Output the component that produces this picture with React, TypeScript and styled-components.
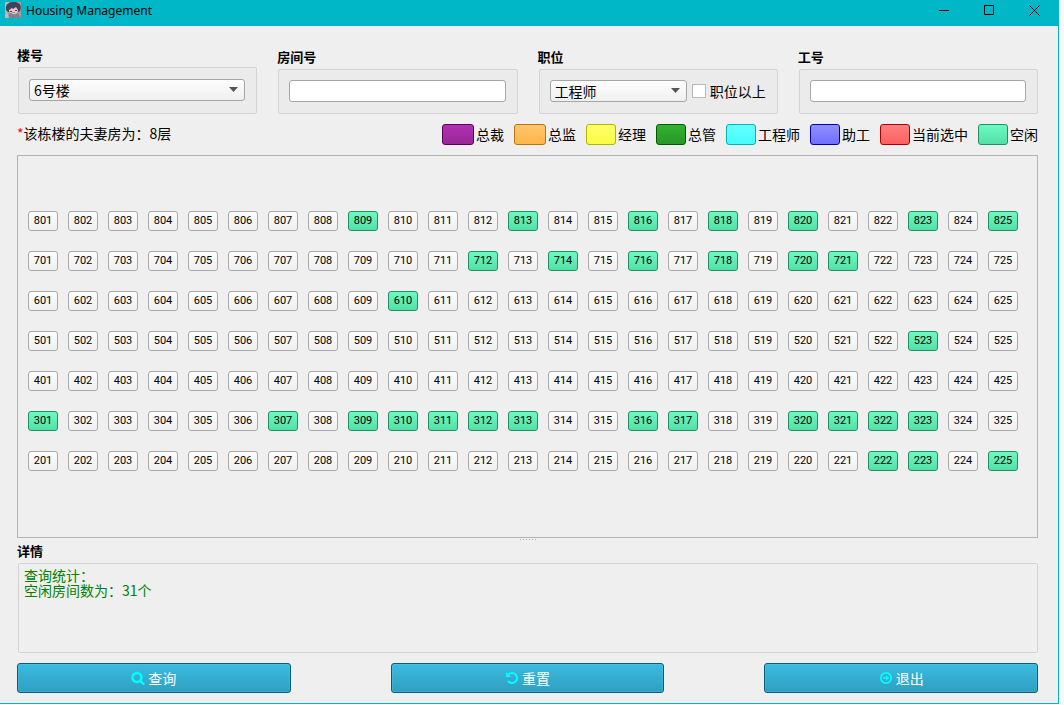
import React, { useState } from "react";
import styled, { createGlobalStyle } from "styled-components";

const GlobalStyle = createGlobalStyle`
  * { box-sizing: border-box; }
  body {
    margin: 0;
    background: #f8f8f8;
    color: #000;
    font-family: "Noto Sans CJK SC", "Noto Sans", sans-serif;
    font-size: 14px;
  }
  button, input, select, textarea { font: inherit; color: inherit; margin: 0; }
`;

const Frame = styled.div`
  min-height: 100vh;
  display: flex;
  padding: 0 5px 1px 0;
`;

const Window = styled.div`
  flex: 1;
  min-width: 0;
  display: flex;
  flex-direction: column;
  background: #efefef;
  border: solid #00b7c7;
  border-width: 0 1px 1px 0;
`;

const TitleBar = styled.header`
  display: flex;
  align-items: flex-start;
  height: 26px;
  padding: 0 1px 0 5px;
  background: #00b7c7;
`;

const Avatar = styled.svg`
  width: 16px;
  height: 16px;
  margin: 2px 5px 0 0;
`;

const Title = styled.h1`
  flex: 1;
  margin: 0;
  font: 400 12px/22px "Noto Sans", sans-serif;
`;

const WindowButton = styled.button`
  display: flex;
  justify-content: center;
  align-items: center;
  width: 45px;
  height: 21px;
  padding: 0;
  border: 0;
  background: none;
`;

const Content = styled.main`
  flex: 1;
  display: flex;
  flex-direction: column;
  padding: 18px 20px 10px 17px;
`;

const Filters = styled.div`
  display: grid;
  grid-template-columns: repeat(4, 1fr);
  gap: 20px;
  align-items: end;
`;

const Caption = styled.h2`
  margin: 0;
  font-size: 13px;
  font-weight: 700;
  line-height: 20px;
`;

const GroupBox = styled.div<{ $tall?: boolean }>`
  display: flex;
  align-items: center;
  height: ${(p) => (p.$tall ? 47 : 45)}px;
  margin: 2px 0 0 1px;
  padding: 0 11px 2px 10px;
  border: 1px solid #d3d3d3;
  border-radius: 2px;
  background: #ebebeb;
`;

const SelectWrap = styled.div`
  flex: 1;
  min-width: 0;
  display: grid;
  align-items: center;
  > * { grid-area: 1 / 1; }
  > svg { justify-self: end; margin-right: 7px; pointer-events: none; }
`;

const Select = styled.select`
  appearance: none;
  width: 100%;
  height: 22px;
  padding: 0 20px 0 4px;
  line-height: 20px;
  border: 1px solid #a6a6a6;
  border-radius: 3px;
  background: linear-gradient(#fdfdfd, #efefef);
`;

const TextInput = styled.input`
  width: 100%;
  height: 22px;
  padding: 0 4px;
  border: 1px solid #a6a6a6;
  border-radius: 3px;
  background: #fff;
`;

const CheckLabel = styled.label`
  display: flex;
  align-items: center;
  gap: 4px;
  margin-left: 5px;
  line-height: 20px;
`;

const Checkbox = styled.input`
  appearance: none;
  width: 14px;
  height: 14px;
  border: 1px solid #b9b9b9;
  background: #fff;
  &:checked { background: #37a9cc; }
`;

const InfoRow = styled.div`
  display: flex;
  align-items: flex-start;
  justify-content: space-between;
  margin: 10px 0;
  line-height: 20px;
`;

const Note = styled.p`
  margin: 0;
  line-height: 18px;
`;

const Asterisk = styled.span`
  color: #f00;
`;

const Legend = styled.ul`
  display: flex;
  gap: 10px;
  margin: 0;
  padding: 0;
  list-style: none;
`;

const LegendItem = styled.li`
  display: flex;
  gap: 2px;
`;

const Swatch = styled.span<{ $from: string; $to: string; $edge: string; $wide?: boolean }>`
  width: ${(p) => (p.$wide ? 32 : 30)}px;
  height: 21px;
  border: 1px solid ${(p) => p.$edge};
  border-radius: 3px;
  background: linear-gradient(${(p) => p.$from}, ${(p) => p.$to});
`;

const RoomPanel = styled.section`
  flex: 1;
  padding: 55px 10px 66px;
  border: 1px solid #b3b3b3;
`;

const RoomGrid = styled.div`
  display: grid;
  grid-template-columns: repeat(25, 30px);
  gap: 20px 10px;
`;

const Room = styled.button<{ $free: boolean }>`
  height: 20px;
  padding: 0;
  font: 400 11px/18px Roboto, sans-serif;
  border: 1px solid ${(p) => (p.$free ? "#239063" : "#aaaaaa")};
  border-radius: 3px;
  background: ${(p) => (p.$free ? "linear-gradient(#6bfac0, #55dfa8)" : "linear-gradient(#fdfdfd, #efefef)")};
`;

const Splitter = styled.svg`
  align-self: center;
  width: 16px;
  height: 3px;
`;

const Details = styled.textarea`
  display: block;
  height: 90px;
  margin: 2px 0 10px 1px;
  padding: 4px 5px;
  line-height: 15px;
  color: #008000;
  border: 1px solid #d3d3d3;
  border-radius: 2px;
  background: #efefef;
  resize: none;
  outline: none;
`;

const Actions = styled.div`
  display: grid;
  grid-template-columns: repeat(3, 1fr);
  gap: 100px;
`;

const Action = styled.button`
  display: flex;
  justify-content: center;
  align-items: center;
  gap: 3px;
  height: 30px;
  padding: 0;
  line-height: 20px;
  color: #fff;
  border: 1px solid #04607a;
  border-radius: 3px;
  background: linear-gradient(#3abbe0, #309fc0);
  box-shadow: inset 0 0 0 1px rgba(90, 205, 235, 0.3);
  svg { width: 14px; height: 14px; color: #0ff; }
`;

const legend = [
  { name: "总裁", from: "#b330b3", to: "#972897", edge: "#5a005a", wide: true },
  { name: "总监", from: "#ffc66a", to: "#fcb54a", edge: "#b87412", wide: true },
  { name: "经理", from: "#ffff68", to: "#fbfb45", edge: "#b4b400" },
  { name: "总管", from: "#31b331", to: "#289728", edge: "#005a00" },
  { name: "工程师", from: "#68ffff", to: "#45fbfb", edge: "#00b4b4" },
  { name: "助工", from: "#9090ff", to: "#7070fc", edge: "#0000a8" },
  { name: "当前选中", from: "#ff8080", to: "#fc6060", edge: "#a80000" },
  { name: "空闲", from: "#6bfac0", to: "#55dfa8", edge: "#239063" },
];

const freeRooms = new Set([
  809, 813, 816, 818, 820, 823, 825,
  712, 714, 716, 718, 720, 721,
  610,
  523,
  301, 307, 309, 310, 311, 312, 313, 316, 317, 320, 321, 322, 323,
  222, 223, 225,
]);

const rooms = [8, 7, 6, 5, 4, 3, 2].flatMap((floor) =>
  Array.from({ length: 25 }, (_, i) => floor * 100 + i + 1)
);

const Chevron = () => (
  <svg width="9" height="5" viewBox="0 0 9 5" aria-hidden="true">
    <path d="M0 0h9L4.5 5z" fill="#555" />
  </svg>
);

const SearchIcon = () => (
  <svg viewBox="0 0 1792 1792" fill="currentColor" stroke="currentColor" strokeWidth="60" aria-hidden="true">
    <path d="M1216 832q0-185-131.5-316.5t-316.5-131.5-316.5 131.5-131.5 316.5 131.5 316.5 316.5 131.5 316.5-131.5 131.5-316.5zm512 832q0 52-38 90t-90 38q-54 0-90-38l-343-342q-179 124-399 124-143 0-273.5-55.5t-225-150-150-225-55.5-273.5 55.5-273.5 150-225 225-150 273.5-55.5 273.5 55.5 225 150 150 225 55.5 273.5q0 220-124 399l343 343q37 37 37 90z" />
  </svg>
);

const UndoIcon = () => (
  <svg viewBox="0 0 1792 1792" fill="currentColor" aria-hidden="true">
    <path d="M1664 896q0 156-61 298t-164 245-245 164-298 61q-172 0-327-72.5t-264-204.5q-7-10-6.5-22.5t8.5-20.5l137-138q10-9 25-9 16 2 23 12 73 95 179 147t225 52q104 0 198.5-40.5t163.5-109.5 109.5-163.5 40.5-198.5-40.5-198.5-109.5-163.5-163.5-109.5-198.5-40.5q-98 0-188 35.5t-160 101.5l137 138q31 30 14 69-17 40-59 40h-448q-26 0-45-19t-19-45v-448q0-42 40-59 39-17 69 14l130 129q107-101 244.5-156.5t284.5-55.5q156 0 298 61t245 164 164 245 61 298z" />
  </svg>
);

const ExitIcon = () => (
  <svg viewBox="0 0 14 14" fill="none" stroke="currentColor" aria-hidden="true">
    <circle cx="7" cy="7" r="5.2" strokeWidth="1.7" />
    <path d="M4 6.2h3V4.1L10.1 7 7 9.9V7.8H4z" fill="currentColor" stroke="none" />
  </svg>
);

export default function App() {
  const [building, setBuilding] = useState("6号楼");
  const [position, setPosition] = useState("工程师");

  return (
    <Frame>
      <GlobalStyle />
      <Window>
        <TitleBar>
          <Avatar viewBox="0 0 16 16" aria-hidden="true">
            <rect width="16" height="16" fill="#a99ba5" />
            <path d="M0 0h4L2 6v5H0z" fill="#c3b3b8" />
            <path d="M1 8C0 2 4 0 9 0c6 0 8 4 6 9l-2 1H3z" fill="#3f435d" />
            <path d="M4 8l3-2 1 1 3-2 2 3c0 3-2 4-4 4S4 11 4 8z" fill="#e3c6c2" />
            <path d="M5 9h2v1H5zM10 8h2v1h-2z" fill="#5a4450" />
            <path d="M7 10h3v1H7z" fill="#c9807c" />
            <path d="M2 16c0-3 2-5 4-5l3 2 4-2 3 5z" fill="#7b8591" />
            <path d="M0 12l3-1 1 5H0z" fill="#cbb6b4" />
          </Avatar>
          <Title>Housing Management</Title>
          <WindowButton aria-label="Minimize">
            <svg width="11" height="11" stroke="#000" fill="none"><path d="M0 5.5h10" /></svg>
          </WindowButton>
          <WindowButton aria-label="Maximize">
            <svg width="11" height="11" stroke="#000" fill="none"><path d="M.5 .5h9v9h-9z" /></svg>
          </WindowButton>
          <WindowButton aria-label="Close">
            <svg width="11" height="11" stroke="#000" fill="none"><path d="M.5 .5l10 10M10.5 .5l-10 10" /></svg>
          </WindowButton>
        </TitleBar>

        <Content>
          <Filters>
            <div>
              <Caption as="label" htmlFor="building">楼号</Caption>
              <GroupBox $tall>
                <SelectWrap>
                  <Select id="building" value={building} onChange={(e) => setBuilding(e.target.value)}>
                    <option>6号楼</option>
                  </Select>
                  <Chevron />
                </SelectWrap>
              </GroupBox>
            </div>
            <div>
              <Caption as="label" htmlFor="room">房间号</Caption>
              <GroupBox>
                <TextInput id="room" type="text" />
              </GroupBox>
            </div>
            <div>
              <Caption as="label" htmlFor="position">职位</Caption>
              <GroupBox>
                <SelectWrap>
                  <Select id="position" value={position} onChange={(e) => setPosition(e.target.value)}>
                    {legend.slice(0, 6).map((l) => (
                      <option key={l.name}>{l.name}</option>
                    ))}
                  </Select>
                  <Chevron />
                </SelectWrap>
                <CheckLabel>
                  <Checkbox type="checkbox" />
                  职位以上
                </CheckLabel>
              </GroupBox>
            </div>
            <div>
              <Caption as="label" htmlFor="staff">工号</Caption>
              <GroupBox>
                <TextInput id="staff" type="text" />
              </GroupBox>
            </div>
          </Filters>

          <InfoRow>
            <Note><Asterisk>*</Asterisk>该栋楼的夫妻房为：8层</Note>
            <Legend>
              {legend.map((l) => (
                <LegendItem key={l.name}>
                  <Swatch $from={l.from} $to={l.to} $edge={l.edge} $wide={l.wide} />
                  {l.name}
                </LegendItem>
              ))}
            </Legend>
          </InfoRow>

          <RoomPanel>
            <RoomGrid>
              {rooms.map((n) => (
                <Room key={n} $free={freeRooms.has(n)}>{n}</Room>
              ))}
            </RoomGrid>
          </RoomPanel>

          <Splitter viewBox="0 0 16 3" aria-hidden="true">
            <path d="M0 1.5h16" stroke="#b5b5b5" strokeDasharray="1 2" />
          </Splitter>

          <Caption as="label" htmlFor="details">详情</Caption>
          <Details id="details" readOnly value={"查询统计：\n空闲房间数为：31个"} />

          <Actions>
            <Action><SearchIcon />查询</Action>
            <Action><UndoIcon />重置</Action>
            <Action><ExitIcon />退出</Action>
          </Actions>
        </Content>
      </Window>
    </Frame>
  );
}
